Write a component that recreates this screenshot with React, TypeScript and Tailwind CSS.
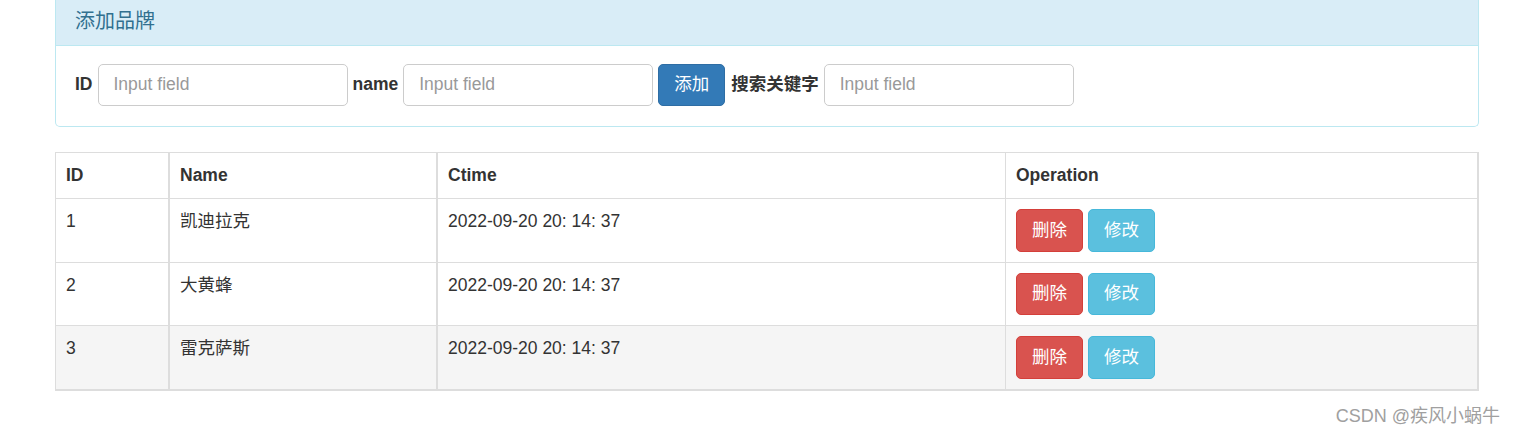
import React from "react";

interface Brand {
  id: number;
  name: string;
  ctime: string;
}

const brands: Brand[] = [
  { id: 1, name: "凯迪拉克", ctime: "2022-09-20 20: 14: 37" },
  { id: 2, name: "大黄蜂", ctime: "2022-09-20 20: 14: 37" },
  { id: 3, name: "雷克萨斯", ctime: "2022-09-20 20: 14: 37" },
];

const font = {
  fontFamily: '"Liberation Sans", Arial, "Noto Sans CJK SC", sans-serif',
};

function Field() {
  return (
    <input
      type="text"
      placeholder="Input field"
      className="h-[42.5px] w-[250px] rounded-[5px] border border-[#ccc] bg-white px-[15px] text-[17.5px] text-[#555] placeholder:text-[#999] outline-none"
    />
  );
}

export default function App() {
  return (
    <div className="min-h-screen bg-white text-[17.5px] leading-[25px] text-[#333]" style={font}>
      <div className="ml-[55px] w-[1424px]">
        <div className="rounded-b-[5px] border border-t-0 border-[#bce8f1] bg-white">
          <div className="border-b border-[#bce8f1] bg-[#d9edf7] px-[19px] pt-[10px] pb-[12.5px]">
            <h3 className="text-[20px] leading-[22px] text-[#31708f]">添加品牌</h3>
          </div>
          <div className="flex items-center gap-[5px] px-[19px] pt-[18px] pb-[20px]">
            <label className="font-bold">ID</label>
            <Field />
            <label className="font-bold">name</label>
            <Field />
            <button className="h-[42.5px] rounded-[5px] border border-[#2e6da4] bg-[#337ab7] px-[15px] text-white">
              添加
            </button>
            <label className="ml-px font-bold">搜索关键字</label>
            <Field />
          </div>
        </div>

        <table className="mt-[25px] w-full border-separate border-spacing-0 border-t border-l border-[#ddd]">
          <thead>
            <tr className="text-left">
              <th className="w-[114px] border-r-2 border-b border-[#ddd] px-[10px] py-[10px]">ID</th>
              <th className="w-[268px] border-r-2 border-b border-[#ddd] px-[10px] py-[10px]">Name</th>
              <th className="w-[568px] border-r border-b border-[#ddd] px-[10px] py-[10px]">Ctime</th>
              <th className="border-r-2 border-b border-[#ddd] px-[10px] py-[10px]">Operation</th>
            </tr>
          </thead>
          <tbody>
            {brands.map((b, i) => {
              const last = i === brands.length - 1;
              const row = last ? "bg-[#f5f5f5] border-b-2" : "border-b";
              return (
                <tr key={b.id} className="align-top">
                  <td className={`border-r-2 border-[#ddd] px-[10px] py-[10px] ${row}`}>{b.id}</td>
                  <td className={`border-r-2 border-[#ddd] px-[10px] py-[10px] ${row}`}>{b.name}</td>
                  <td className={`border-r border-[#ddd] px-[10px] py-[10px] ${row}`}>{b.ctime}</td>
                  <td className={`border-r-2 border-[#ddd] px-[10px] py-[10px] ${row}`}>
                    <div className="flex gap-[5px]">
                      <button className="h-[42.5px] rounded-[5px] border border-[#d43f3a] bg-[#d9534f] px-[15px] text-white">
                        删除
                      </button>
                      <button className="h-[42.5px] rounded-[5px] border border-[#46b8da] bg-[#5bc0de] px-[15px] text-white">
                        修改
                      </button>
                    </div>
                  </td>
                </tr>
              );
            })}
          </tbody>
        </table>
      </div>
      <div className="mt-[13px] flex justify-end pr-[16px] text-[18px] text-[#a0a0a0]">
        CSDN @疾风小蜗牛
      </div>
    </div>
  );
}
